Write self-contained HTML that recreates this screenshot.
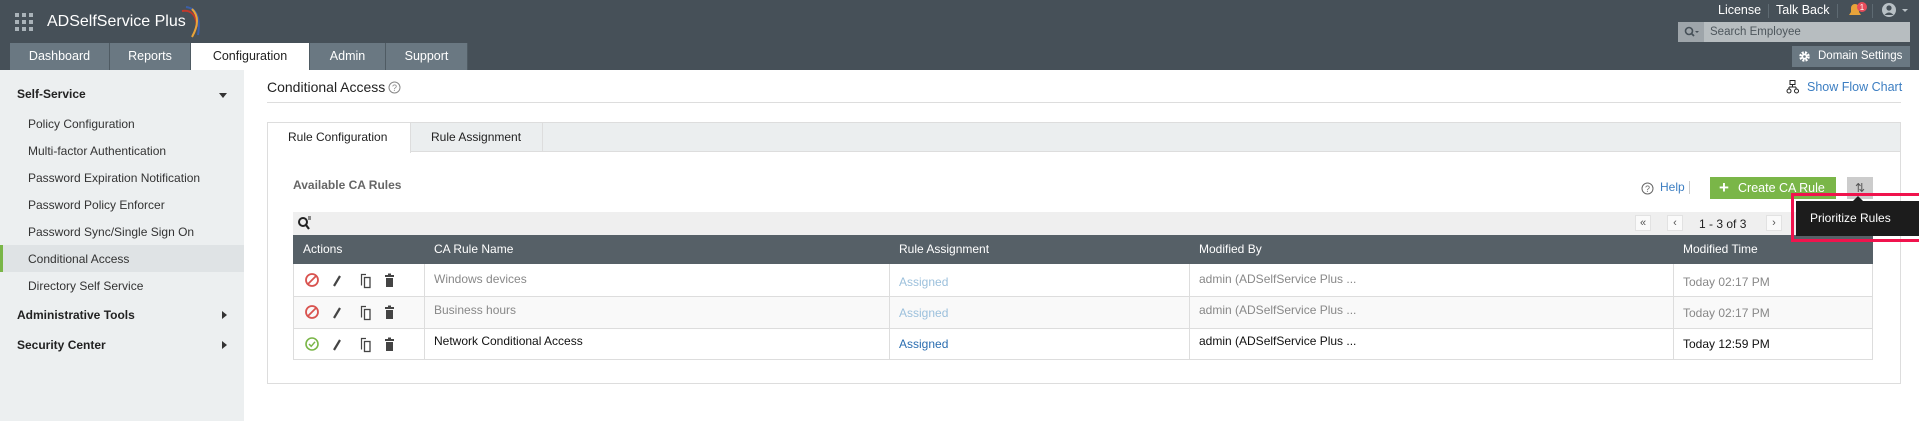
<!DOCTYPE html>
<html><head><meta charset="utf-8"><style>
*{box-sizing:border-box;margin:0;padding:0}
body{width:1919px;height:421px;overflow:hidden;font-family:"Liberation Sans",sans-serif;font-size:12px;color:#222;background:#fff;position:relative}
.a{position:absolute}
.hdr{left:0;top:0;width:1919px;height:70px;background:#465058}
.tab{top:43px;height:27px;background:#6a7882;color:#fff;font-size:12.5px;text-align:center;line-height:27px;border-right:1px solid #4f5b63}
.side{left:0;top:70px;width:244px;height:351px;background:#eceff0}
.si{left:28px;font-size:12px;color:#333}
.sh{left:17px;font-size:12px;font-weight:bold;color:#222}
.car{width:0;height:0;border-left:4px solid transparent;border-right:4px solid transparent;border-top:5px solid #333}
.carr{width:0;height:0;border-top:4px solid transparent;border-bottom:4px solid transparent;border-left:5px solid #333}
.th{top:235px;height:29px;line-height:29px;color:#fff;font-size:12px;padding-left:10px}
</style></head><body>
<div class="a hdr"></div>
<svg class="a" style="left:15px;top:13px" width="18" height="18" fill="#aab3b9"><rect x="0" y="0" width="4" height="4"/><rect x="7" y="0" width="4" height="4"/><rect x="14" y="0" width="4" height="4"/><rect x="0" y="7" width="4" height="4"/><rect x="7" y="7" width="4" height="4"/><rect x="14" y="7" width="4" height="4"/><rect x="0" y="14" width="4" height="4"/><rect x="7" y="14" width="4" height="4"/><rect x="14" y="14" width="4" height="4"/></svg>
<div class="a" style="left:47px;top:13px;color:#fff;font-size:16px">ADSelfService Plus</div>
<svg class="a" style="left:178px;top:5px" width="24" height="34" fill="none"><path d="M4 6 Q18 4 19 22" stroke="#c0392b" stroke-width="2"/><path d="M8 2 Q24 4 20 30" stroke="#3b5fa8" stroke-width="2"/><path d="M14 4 Q24 14 14 32" stroke="#e8a33a" stroke-width="2"/></svg>
<div class="a tab" style="left:10px;width:100px">Dashboard</div>
<div class="a tab" style="left:110px;width:81px">Reports</div>
<div class="a tab" style="left:191px;width:119px;background:#fff;color:#222">Configuration</div>
<div class="a tab" style="left:310px;width:76px">Admin</div>
<div class="a tab" style="left:386px;width:82px">Support</div>
<div class="a" style="left:1718px;top:3px;color:#fff;font-size:12.5px">License</div>
<div class="a" style="left:1768px;top:4px;width:1px;height:14px;background:#5e6a72"></div>
<div class="a" style="left:1776px;top:3px;color:#fff;font-size:12.5px">Talk Back</div>
<div class="a" style="left:1837px;top:4px;width:1px;height:14px;background:#5e6a72"></div>
<svg class="a" style="left:1847px;top:2px" width="22" height="16"><path d="M2 13 H14 L12 10 V6 A4 4 0 0 0 4 6 V10 Z" fill="#e8a33a"/><circle cx="15" cy="5" r="5" fill="#e74c5b"/><text x="15" y="8" font-size="8" fill="#fff" text-anchor="middle" font-family="Liberation Sans">1</text></svg>
<div class="a" style="left:1872px;top:4px;width:1px;height:14px;background:#5e6a72"></div>
<svg class="a" style="left:1882px;top:2px" width="30" height="16"><circle cx="7" cy="8" r="7" fill="#b8c0c5"/><circle cx="7" cy="6" r="2.6" fill="#465058"/><path d="M2.5 13 Q7 8 11.5 13" fill="#465058"/><path d="M20 7 h6 l-3 3z" fill="#b8c0c5"/></svg>
<div class="a" style="left:1678px;top:22px;width:26px;height:20px;background:#9ea5aa"></div>
<svg class="a" style="left:1684px;top:26px" width="16" height="12"><circle cx="5" cy="5" r="3.5" stroke="#465058" stroke-width="1.6" fill="none"/><path d="M7.5 7.5 L10 10" stroke="#465058" stroke-width="1.8"/><path d="M11 5h4l-2 2z" fill="#465058"/></svg>
<div class="a" style="left:1704px;top:22px;width:206px;height:20px;background:#b7bdc0;color:#4d565c;font-size:11.5px;line-height:20px;padding-left:6px">Search Employee</div>
<div class="a" style="left:1792px;top:46px;width:118px;height:21px;background:#6a7882;color:#fff;font-size:11.5px;line-height:21px;padding-left:26px">Domain Settings</div>
<svg class="a" style="left:1798px;top:50px" width="13" height="13"><circle cx="6.5" cy="6.5" r="4" fill="none" stroke="#fff" stroke-width="2.5" stroke-dasharray="2 1.2"/><circle cx="6.5" cy="6.5" r="3" fill="#fff"/><circle cx="6.5" cy="6.5" r="1.3" fill="#6a7882"/></svg>

<div class="a side"></div>
<div class="a sh" style="top:87px">Self-Service</div><div class="a car" style="left:219px;top:93px"></div>
<div class="a si" style="top:117px">Policy Configuration</div>
<div class="a si" style="top:144px">Multi-factor Authentication</div>
<div class="a si" style="top:171px">Password Expiration Notification</div>
<div class="a si" style="top:198px">Password Policy Enforcer</div>
<div class="a si" style="top:225px">Password Sync/Single Sign On</div>
<div class="a" style="left:0;top:245px;width:244px;height:27px;background:#dfe3e5;border-left:3px solid #7ab648"></div>
<div class="a si" style="top:252px">Conditional Access</div>
<div class="a si" style="top:279px">Directory Self Service</div>
<div class="a sh" style="top:308px">Administrative Tools</div><div class="a carr" style="left:222px;top:311px"></div>
<div class="a sh" style="top:338px">Security Center</div><div class="a carr" style="left:222px;top:341px"></div>

<div class="a" style="left:267px;top:79px;font-size:14px;color:#222">Conditional Access</div>
<svg class="a" style="left:388px;top:81px" width="13" height="13"><circle cx="6.5" cy="6.5" r="5.5" fill="none" stroke="#888"/><text x="6.5" y="10" font-size="9" fill="#888" text-anchor="middle" font-family="Liberation Sans">?</text></svg>
<div class="a" style="left:267px;top:102px;width:1634px;height:1px;background:#ddd"></div>
<svg class="a" style="left:1786px;top:80px" width="14" height="14" fill="none" stroke="#222"><rect x="4" y="0.5" width="5" height="4"/><path d="M6.5 4.5V7M3 7H10M3 7V9M10 7V9"/><circle cx="3" cy="11" r="2"/><circle cx="10.5" cy="11" r="2"/></svg>
<div class="a" style="left:1807px;top:80px;color:#3c7ec2;font-size:12.5px">Show Flow Chart</div>

<div class="a" style="left:267px;top:122px;width:1634px;height:262px;border:1px solid #ddd"></div>
<div class="a" style="left:268px;top:123px;width:1632px;height:29px;background:#ebeeef;border-bottom:1px solid #ddd"></div>
<div class="a" style="left:268px;top:123px;width:143px;height:30px;background:#fff;border-right:1px solid #ddd;line-height:28px;padding-left:20px">Rule Configuration</div>
<div class="a" style="left:411px;top:123px;width:132px;height:29px;border-right:1px solid #ddd;line-height:28px;padding-left:20px">Rule Assignment</div>

<div class="a" style="left:293px;top:178px;font-weight:bold;color:#666;font-size:12px">Available CA Rules</div>
<svg class="a" style="left:1641px;top:182px" width="13" height="13"><circle cx="6.5" cy="6.5" r="5.5" fill="none" stroke="#666"/><text x="6.5" y="10" font-size="9" fill="#666" text-anchor="middle" font-family="Liberation Sans">?</text></svg>
<div class="a" style="left:1660px;top:180px;color:#3c7ec2;font-size:12px">Help</div>
<div class="a" style="left:1689px;top:181px;width:1px;height:13px;background:#ccc"></div>
<div class="a" style="left:1710px;top:177px;width:126px;height:22px;background:#7ab648;color:#fff;font-size:12.5px;line-height:22px;padding-left:28px">Create CA Rule</div>
<div class="a" style="left:1719px;top:178px;color:#fff;font-size:17px;font-weight:bold;line-height:20px">+</div>
<div class="a" style="left:1847px;top:177px;width:26px;height:22px;background:#ccc;color:#555;text-align:center;line-height:22px;font-size:12px">⇅</div>

<div class="a" style="left:293px;top:212px;width:1580px;height:23px;background:#efefef"></div>
<svg class="a" style="left:297px;top:215px" width="16" height="16" fill="none" stroke="#222"><circle cx="6" cy="7" r="4" stroke-width="2"/><path d="M9 10L12 14" stroke-width="2.2"/><path d="M11 2h3M11 4h3" stroke-width="1"/></svg>
<div class="a" style="left:1635px;top:215px;width:16px;height:16px;background:#fafafa;border:1px solid #e2e2e2;text-align:center;font-size:11px;line-height:14px;color:#555">«</div>
<div class="a" style="left:1667px;top:215px;width:16px;height:16px;background:#fafafa;border:1px solid #e2e2e2;text-align:center;font-size:11px;line-height:14px;color:#555">‹</div>
<div class="a" style="left:1699px;top:217px;font-size:12px">1 - 3 of 3</div>
<div class="a" style="left:1766px;top:215px;width:16px;height:16px;background:#fafafa;border:1px solid #e2e2e2;text-align:center;font-size:11px;line-height:14px;color:#555">›</div>

<div class="a" style="left:293px;top:235px;width:1580px;height:29px;background:#566067"></div>
<div class="a th" style="left:293px">Actions</div>
<div class="a th" style="left:424px">CA Rule Name</div>
<div class="a th" style="left:889px">Rule Assignment</div>
<div class="a th" style="left:1189px">Modified By</div>
<div class="a th" style="left:1673px">Modified Time</div>

<div class="a" style="left:293px;top:264px;width:1580px;height:96px;border:1px solid #ddd;border-top:none"></div>
<div class="a" style="left:294px;top:296px;width:1578px;height:32px;background:#f9f9f9"></div>
<div class="a" style="left:294px;top:296px;width:1578px;height:1px;background:#ddd"></div>
<div class="a" style="left:294px;top:328px;width:1578px;height:1px;background:#ddd"></div>
<div class="a" style="left:424px;top:264px;width:1px;height:95px;background:#ddd"></div>
<div class="a" style="left:889px;top:264px;width:1px;height:95px;background:#ddd"></div>
<div class="a" style="left:1189px;top:264px;width:1px;height:95px;background:#ddd"></div>
<div class="a" style="left:1673px;top:264px;width:1px;height:95px;background:#ddd"></div>

<svg class="a" style="left:304px;top:272px" width="100" height="84">
 <g><circle cx="8" cy="8" r="6" fill="none" stroke="#d9534f" stroke-width="1.8"/><path d="M4 12L12 4" stroke="#d9534f" stroke-width="1.8"/></g>
 <g transform="translate(0,32)"><circle cx="8" cy="8" r="6" fill="none" stroke="#d9534f" stroke-width="1.8"/><path d="M4 12L12 4" stroke="#d9534f" stroke-width="1.8"/></g>
 <g transform="translate(0,64)"><circle cx="8" cy="8" r="6" fill="none" stroke="#7ab648" stroke-width="1.6"/><path d="M5 8L7.2 10.3L11 5.8" stroke="#7ab648" stroke-width="1.5" fill="none"/></g>
 <g id="ic" fill="#444" stroke="#444">
  <path d="M30 14L36 4" stroke-width="2.2"/>
  <path d="M57.5 13.5V2.5H62" fill="none" stroke-width="1.2"/><rect x="60.5" y="5.5" width="5.5" height="10" fill="#fff" stroke-width="1.3"/>
  <rect x="81" y="3" width="9" height="2" stroke="none"/><rect x="84" y="1.5" width="3" height="1.5" stroke="none"/><rect x="82" y="6" width="7" height="9" stroke="none"/>
 </g>
 <use href="#ic" transform="translate(0,32)"/>
 <use href="#ic" transform="translate(0,64)"/>
</svg>

<div class="a" style="left:434px;top:272px;color:#888">Windows devices</div>
<div class="a" style="left:899px;top:275px;color:#9cc0dc">Assigned</div>
<div class="a" style="left:1199px;top:272px;color:#888">admin (ADSelfService Plus ...</div>
<div class="a" style="left:1683px;top:275px;color:#888">Today 02:17 PM</div>

<div class="a" style="left:434px;top:303px;color:#888">Business hours</div>
<div class="a" style="left:899px;top:306px;color:#9cc0dc">Assigned</div>
<div class="a" style="left:1199px;top:303px;color:#888">admin (ADSelfService Plus ...</div>
<div class="a" style="left:1683px;top:306px;color:#888">Today 02:17 PM</div>

<div class="a" style="left:434px;top:334px;color:#111">Network Conditional Access</div>
<div class="a" style="left:899px;top:337px;color:#2a6db0">Assigned</div>
<div class="a" style="left:1199px;top:334px;color:#111">admin (ADSelfService Plus ...</div>
<div class="a" style="left:1683px;top:337px;color:#111">Today 12:59 PM</div>

<div class="a" style="left:1791px;top:193px;width:128px;height:49px;border:3px solid #f0134d;border-right:none"></div>
<div class="a" style="left:1796px;top:201px;width:123px;height:35px;background:#1c1c1c;color:#fff;font-size:12px;line-height:35px;padding-left:14px">Prioritize Rules</div>
<div class="a" style="left:1853px;top:196px;width:0;height:0;border-left:5px solid transparent;border-right:5px solid transparent;border-bottom:5px solid #1c1c1c"></div>
</body></html>
